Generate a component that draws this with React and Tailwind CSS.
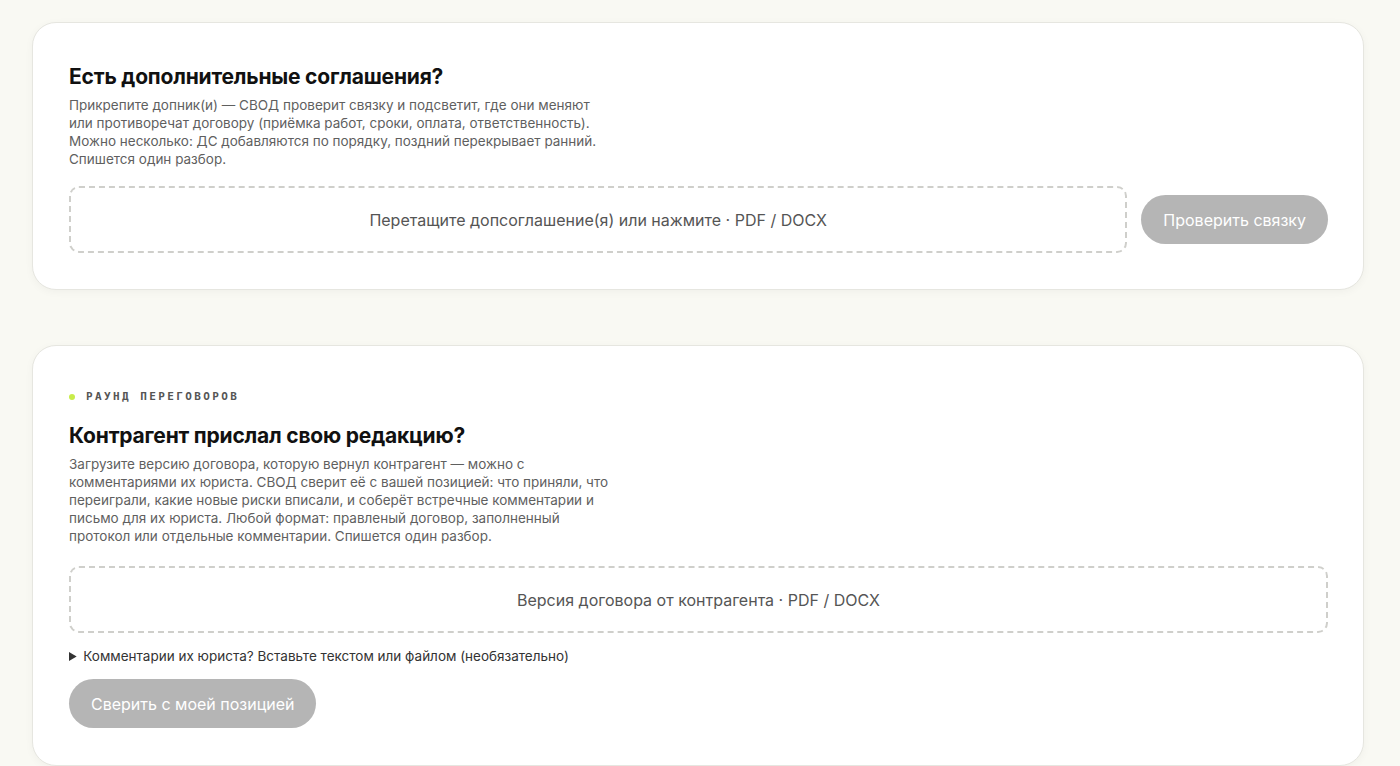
import React from 'react';

function DropZone({ label }) {
  return (
    <div className="flex h-[67px] flex-1 items-center justify-center rounded-[10px] border-2 border-dashed border-[#cfcfcb] text-[16px] text-[#555]">
      {label}
    </div>
  );
}

export default function App() {
  return (
    <div
      className="min-h-screen bg-[#f9f9f3] pl-[32px] pr-[36px] pt-[22px] pb-[2px] text-[#111]"
      style={{ fontFamily: 'Inter, "Noto Sans", sans-serif' }}
    >
      {/* Supplementary agreements */}
      <section className="rounded-[24px] border border-[#e6e6e0] bg-white pl-[36px] pr-[35px] pt-[40px] pb-[36px] shadow-[0_2px_8px_rgba(0,0,0,0.04)]">
        <h2 className="text-[21px] leading-[28px] font-bold tracking-[-0.2px]">Есть дополнительные соглашения?</h2>
        <p className="mt-[5px] max-w-[545px] text-[13.5px] leading-[18px] text-[#5f5f5f]">
          Прикрепите допник(и) — СВОД проверит связку и подсветит, где они меняют или противоречат договору (приёмка работ, сроки, оплата, ответственность). Можно несколько: ДС добавляются по порядку, поздний перекрывает ранний. Спишется один разбор.
        </p>
        <div className="mt-[18px] flex items-center gap-[14px]">
          <DropZone label="Перетащите допсоглашение(я) или нажмите · PDF / DOCX" />
          <button className="h-[49px] rounded-full bg-[#b5b5b5] px-[22px] text-[16px] text-white">
            Проверить связку
          </button>
        </div>
      </section>

      {/* Negotiation round */}
      <section className="mt-[55px] rounded-[24px] border border-[#e6e6e0] bg-white pl-[36px] pr-[35px] pt-[44px] pb-[37px] shadow-[0_2px_8px_rgba(0,0,0,0.04)]">
        <div className="flex h-[14px] items-center gap-[11px]">
          <span className="h-[6px] w-[6px] rounded-full bg-[#c8ec4a]" />
          <span
            className="text-[11px] leading-[14px] font-bold tracking-[2.4px] text-[#555]"
            style={{ fontFamily: '"DejaVu Sans Mono", monospace' }}
          >
            РАУНД ПЕРЕГОВОРОВ
          </span>
        </div>
        <h2 className="mt-[18px] text-[21px] leading-[28px] font-bold tracking-[-0.2px]">Контрагент прислал свою редакцию?</h2>
        <p className="mt-[5px] max-w-[545px] text-[13.5px] leading-[18px] text-[#5f5f5f]">
          Загрузите версию договора, которую вернул контрагент — можно с комментариями их юриста. СВОД сверит её с вашей позицией: что приняли, что переиграли, какие новые риски вписали, и соберёт встречные комментарии и письмо для их юриста. Любой формат: правленый договор, заполненный протокол или отдельные комментарии. Спишется один разбор.
        </p>
        <div className="mt-[21px] flex">
          <DropZone label="Версия договора от контрагента · PDF / DOCX" />
        </div>
        <details className="mt-[13px] text-[13.5px] text-[#333]">
          <summary className="cursor-pointer">Комментарии их юриста? Вставьте текстом или файлом (необязательно)</summary>
        </details>
        <button className="mt-[13px] h-[49px] rounded-full bg-[#b5b5b5] px-[22px] text-[16px] text-white">
          Сверить с моей позицией
        </button>
      </section>
    </div>
  );
}
